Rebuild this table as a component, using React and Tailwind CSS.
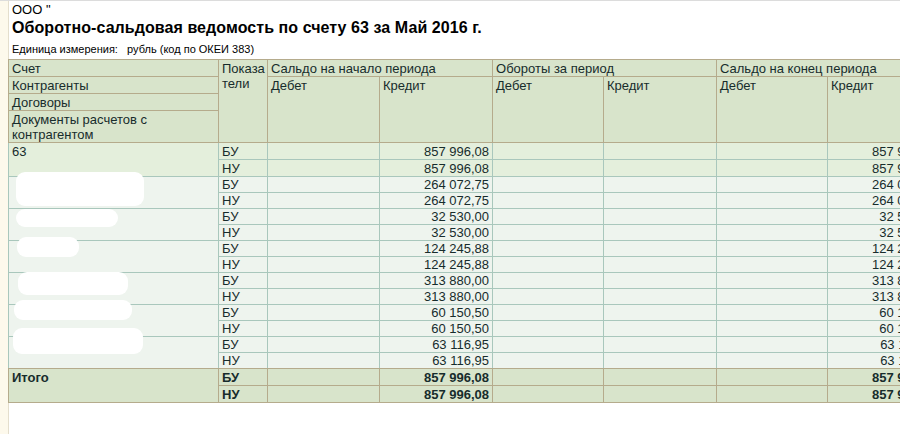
import React from "react";

const TAN = "border-[#b5ab8c]";
const TEAL = "border-[#a9c7bc]";

const groups = [
  { label: "63", val: "857 996,08", main: true },
  { blob: [[7, -5, 128, 34]], val: "264 072,75" },
  { blob: [[7, 0, 102, 18]], val: "32 530,00" },
  { blob: [[8, -4, 62, 20]], val: "124 245,88" },
  { blob: [[9, -1, 110, 23]], val: "313 880,00" },
  { blob: [[5, -5, 118, 20]], val: "60 150,50" },
  { blob: [[4, -9, 130, 26]], val: "63 116,95" },
];

function Blob({ b }) {
  const [l, t, w, h] = b;
  return (
    <div
      className="absolute bg-white rounded-[9px] blur-[0.6px]"
      style={{ left: l, top: t, width: w, height: h }}
    />
  );
}

export default function App() {
  const hc = `border ${TAN} align-top pl-[3px] pr-[3px] pt-[1px] pb-0 leading-[15px] text-left font-normal`;
  return (
    <div className="w-[900px] h-[434px] overflow-hidden bg-white flex border-t border-[#dcdcdc] font-['Liberation_Sans',Arial,sans-serif] text-[#172c2c]">
      <div className="w-[8px] shrink-0 bg-[#fdf9ec]" />
      <div className="flex-1 border-l border-[#e4decd] min-w-0">
        <div className="pl-[3px] text-black">
          <div className="text-[13px] leading-[15px] pt-[1px]">ООО "</div>
          <div className="text-[16px] leading-[19px] font-bold mt-[1px] tracking-[0.07px]">
            Оборотно-сальдовая ведомость по счету 63 за Май 2016 г.
          </div>
          <div className="text-[11px] leading-[13px] mt-[6px] whitespace-pre">
            {"Единица измерения:   рубль (код по ОКЕИ 383)"}
          </div>
        </div>
        <table className="-ml-px mt-[3px] border-collapse table-fixed w-[932px] text-[13px]">
          <colgroup>
            <col className="w-[210px]" />
            <col className="w-[49px]" />
            <col className="w-[112px]" />
            <col className="w-[113px]" />
            <col className="w-[111px]" />
            <col className="w-[113px]" />
            <col className="w-[111px]" />
            <col className="w-[113px]" />
          </colgroup>
          <thead className="bg-[#d8e4cb]">
            <tr>
              <th className={hc}>Счет</th>
              <th className={hc} rowSpan={4}>
                Показа
                <br />
                тели
              </th>
              <th className={hc} colSpan={2}>Сальдо на начало периода</th>
              <th className={hc} colSpan={2}>Обороты за период</th>
              <th className={hc} colSpan={2}>Сальдо на конец периода</th>
            </tr>
            <tr>
              <th className={hc}>Контрагенты</th>
              <th className={hc} rowSpan={3}>Дебет</th>
              <th className={hc} rowSpan={3}>Кредит</th>
              <th className={hc} rowSpan={3}>Дебет</th>
              <th className={hc} rowSpan={3}>Кредит</th>
              <th className={hc} rowSpan={3}>Дебет</th>
              <th className={hc} rowSpan={3}>Кредит</th>
            </tr>
            <tr>
              <th className={hc}>Договоры</th>
            </tr>
            <tr>
              <th className={hc}>
                Документы расчетов с
                <br />
                контрагентом
              </th>
            </tr>
          </thead>
          <tbody>
            {groups.map((g, gi) => {
              const bg = g.main ? "bg-[#e4efdc]" : "bg-[#eef4ee]";
              const last = gi === groups.length - 1;
              const lastB = last ? "border-b-[#b5ab8c]" : "";
              const pad = g.main ? "pt-[1px] pb-0" : "py-0";
              const c = `border ${TEAL} px-[3px] ${pad} leading-[15px] align-top`;
              const num = `${c} text-right`;
              return (
                <React.Fragment key={gi}>
                  <tr className={bg}>
                    <td className={`${c} ${lastB} relative`} rowSpan={2}>
                      {g.label || ""}
                      {g.blob && g.blob.map((b, i) => <Blob key={i} b={b} />)}
                    </td>
                    <td className={c}>БУ</td>
                    <td className={c}></td>
                    <td className={num}>{g.val}</td>
                    <td className={c}></td>
                    <td className={c}></td>
                    <td className={c}></td>
                    <td className={num}>{g.val}</td>
                  </tr>
                  <tr className={bg}>
                    <td className={`${c} ${lastB}`}>НУ</td>
                    <td className={`${c} ${lastB}`}></td>
                    <td className={`${num} ${lastB}`}>{g.val}</td>
                    <td className={`${c} ${lastB}`}></td>
                    <td className={`${c} ${lastB}`}></td>
                    <td className={`${c} ${lastB}`}></td>
                    <td className={`${num} ${lastB}`}>{g.val}</td>
                  </tr>
                </React.Fragment>
              );
            })}
          </tbody>
          <tfoot className="bg-[#d8e4cb] font-bold">
            {["БУ", "НУ"].map((k, i) => (
              <tr key={k}>
                {i === 0 && (
                  <td className={`border ${TAN} px-[3px] pt-[1px] pb-0 leading-[15px] align-top`} rowSpan={2}>
                    Итого
                  </td>
                )}
                <td className={`border ${TAN} px-[3px] pt-[1px] pb-0 leading-[15px] align-top`}>{k}</td>
                <td className={`border ${TAN}`}></td>
                <td className={`border ${TAN} px-[3px] pt-[1px] pb-0 leading-[15px] text-right align-top`}>857 996,08</td>
                <td className={`border ${TAN}`}></td>
                <td className={`border ${TAN}`}></td>
                <td className={`border ${TAN}`}></td>
                <td className={`border ${TAN} px-[3px] pt-[1px] pb-0 leading-[15px] text-right align-top`}>857 996,08</td>
              </tr>
            ))}
          </tfoot>
        </table>
      </div>
    </div>
  );
}
